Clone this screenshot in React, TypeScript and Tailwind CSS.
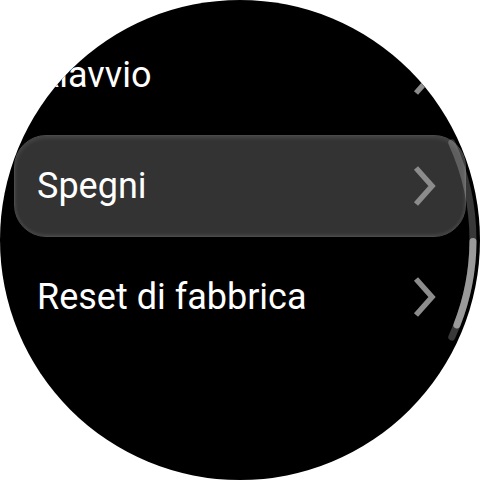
import React from "react";

const Chevron = () => (
  <svg width="26" height="42" viewBox="0 0 26 42" className="shrink-0">
    <polyline
      points="4,3 20,21 4,39"
      fill="none"
      stroke="#8c8c8c"
      strokeWidth="5.5"
      strokeLinejoin="miter"
      strokeLinecap="butt"
    />
  </svg>
);

const items = [
  { label: "Riavvio", selected: false },
  { label: "Spegni", selected: true },
  { label: "Reset di fabbrica", selected: false },
];

export default function App() {
  return (
    <div className="w-[480px] h-[480px] bg-white">
      <div
        className="relative w-[480px] h-[480px] rounded-full bg-black overflow-hidden"
        style={{ fontFamily: "Roboto, 'Noto Sans', sans-serif" }}
      >
        <div className="flex flex-col gap-[9px] px-[14px] pt-[24px]">
          {items.map((it) => (
            <div
              key={it.label}
              className={
                it.selected
                  ? "h-[102px] flex items-center justify-between pl-[22px] pr-[27px] rounded-[32px] bg-[#333333] border border-[#4a4a4a] shadow-[inset_0_2px_4px_rgba(255,255,255,0.10),inset_0_-2px_3px_rgba(255,255,255,0.07)]"
                  : "h-[102px] flex items-center justify-between pl-[23px] pr-[28px] rounded-[32px]"
              }
            >
              <span className="text-[36px] leading-[36px] text-white">{it.label}</span>
              <Chevron />
            </div>
          ))}
        </div>
        <svg
          className="absolute inset-0 pointer-events-none"
          width="480"
          height="480"
          viewBox="0 0 480 480"
        >
          <path
            d="M 451.8 143 A 233 233 0 0 1 451.8 337"
            fill="none"
            stroke="rgba(255,255,255,0.22)"
            strokeWidth="7"
            strokeLinecap="round"
          />
          <path
            d="M 473 241.6 A 233 233 0 0 1 456.9 325"
            fill="none"
            stroke="#9a9a9a"
            strokeWidth="7"
            strokeLinecap="round"
          />
        </svg>
      </div>
    </div>
  );
}
